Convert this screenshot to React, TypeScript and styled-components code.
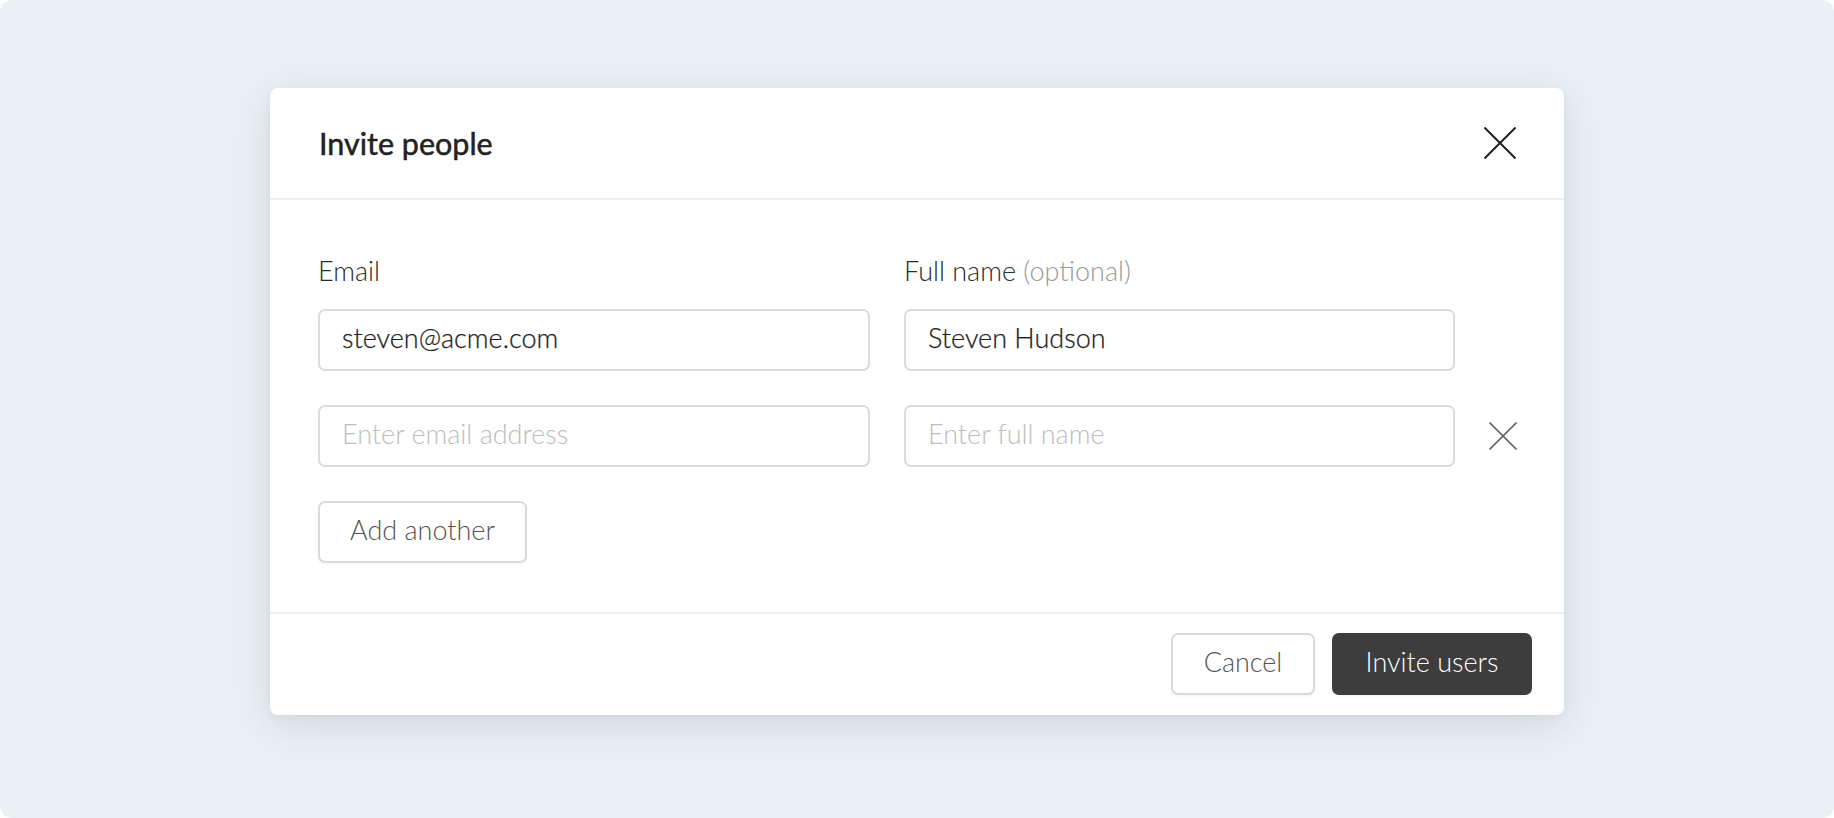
import React from "react";
import styled, { createGlobalStyle } from "styled-components";

const GlobalStyle = createGlobalStyle`
  html, body { margin: 0; padding: 0; background: #ffffff; }
  body { font-family: "Lato", "Open Sans", sans-serif; -webkit-font-smoothing: antialiased; }
  * { box-sizing: border-box; }
`;

const Page = styled.div`
  width: 1834px;
  height: 818px;
  background: #ebf0f4;
  border-radius: 12px;
  display: flex;
  justify-content: center;
  align-items: flex-start;
  padding-top: 88px;
`;

const Modal = styled.div`
  width: 1294px;
  background: #ffffff;
  border-radius: 8px;
  box-shadow: 0 10px 44px rgba(40, 60, 80, 0.13), 0 2px 8px rgba(40, 60, 80, 0.05);
  display: flex;
  flex-direction: column;
`;

const Header = styled.div`
  height: 112px;
  border-bottom: 2px solid #eeeeee;
  display: flex;
  align-items: center;
  justify-content: space-between;
  padding: 0 48px 0 49px;
`;

const Title = styled.h1`
  margin: 0;
  font-size: 30.5px;
  line-height: 36px;
  font-weight: 400;
  color: #222222;
  -webkit-text-stroke: 0.5px #222222;
`;

const IconButton = styled.button<{ $size: number }>`
  width: ${(p) => p.$size}px;
  height: ${(p) => p.$size}px;
  padding: 0;
  border: none;
  background: transparent;
  display: flex;
  align-items: center;
  justify-content: center;
  cursor: pointer;
  svg { display: block; }
`;

const Body = styled.div`
  padding: 53px 48px 49px 48px;
  display: flex;
  flex-direction: column;
`;

const Row = styled.div<{ $gapBelow: number }>`
  display: grid;
  grid-template-columns: 552px 551px 1fr;
  column-gap: 34px;
  align-items: center;
  margin-bottom: ${(p) => p.$gapBelow}px;
`;

const Label = styled.label`
  font-size: 27px;
  line-height: 36px;
  font-weight: 300;
  color: #2b2b2b;
`;

const Hint = styled.span`
  color: #9a9a9a;
`;

const Input = styled.input`
  width: 100%;
  height: 62px;
  border: 2px solid #dcdcdc;
  border-radius: 7px;
  padding: 0 22px 6px 22px;
  font-family: "Lato", sans-serif;
  font-size: 27px;
  font-weight: 300;
  color: #1e1e1e;
  -webkit-text-stroke: 0.25px #1e1e1e;
  background: #ffffff;
  outline: none;
  &::placeholder {
    color: #bdbdbd;
    font-weight: 300;
    -webkit-text-stroke: 0;
  }
`;

const RemoveCell = styled.div`
  display: flex;
  justify-content: flex-end;
`;

const Button = styled.button<{ $primary?: boolean; $width: number }>`
  width: ${(p) => p.$width}px;
  height: 62px;
  border-radius: 7px;
  border: 2px solid ${(p) => (p.$primary ? "#3c3d3c" : "#dadada")};
  background: ${(p) => (p.$primary ? "#3c3d3c" : "#ffffff")};
  color: ${(p) => (p.$primary ? "#ffffff" : "#555555")};
  font-family: "Lato", sans-serif;
  font-size: 27px;
  font-weight: 300;
  padding: 0 0 6px 0;
  cursor: pointer;
  box-shadow: 0 2px 2px rgba(0, 0, 0, 0.03);
`;

const AddRow = styled.div`
  display: flex;
`;

const Footer = styled.div`
  border-top: 2px solid #eeeeee;
  padding: 19px 32px 20px 32px;
  display: flex;
  justify-content: flex-end;
  gap: 17px;
`;

const CloseIcon = ({ size, color, stroke }: { size: number; color: string; stroke: number }) => (
  <svg width={size} height={size} viewBox={`0 0 ${size} ${size}`} fill="none">
    <line x1="0.5" y1="0.5" x2={size - 0.5} y2={size - 0.5} stroke={color} strokeWidth={stroke} />
    <line x1={size - 0.5} y1="0.5" x2="0.5" y2={size - 0.5} stroke={color} strokeWidth={stroke} />
  </svg>
);

export default function App() {
  return (
    <>
      <GlobalStyle />
      <Page>
        <Modal>
          <Header>
            <Title>Invite people</Title>
            <IconButton $size={32} aria-label="Close">
              <CloseIcon size={32} color="#222222" stroke={2} />
            </IconButton>
          </Header>
          <Body>
            <Row $gapBelow={20}>
              <Label>Email</Label>
              <Label>
                Full name <Hint>(optional)</Hint>
              </Label>
              <span />
            </Row>
            <Row $gapBelow={34}>
              <Input defaultValue="steven@acme.com" />
              <Input defaultValue="Steven Hudson" />
              <span />
            </Row>
            <Row $gapBelow={34}>
              <Input placeholder="Enter email address" />
              <Input placeholder="Enter full name" />
              <RemoveCell>
                <IconButton $size={28} aria-label="Remove">
                  <CloseIcon size={28} color="#666666" stroke={1.6} />
                </IconButton>
              </RemoveCell>
            </Row>
            <AddRow>
              <Button $width={209}>Add another</Button>
            </AddRow>
          </Body>
          <Footer>
            <Button $width={144}>Cancel</Button>
            <Button $primary $width={200}>Invite users</Button>
          </Footer>
        </Modal>
      </Page>
    </>
  );
}
